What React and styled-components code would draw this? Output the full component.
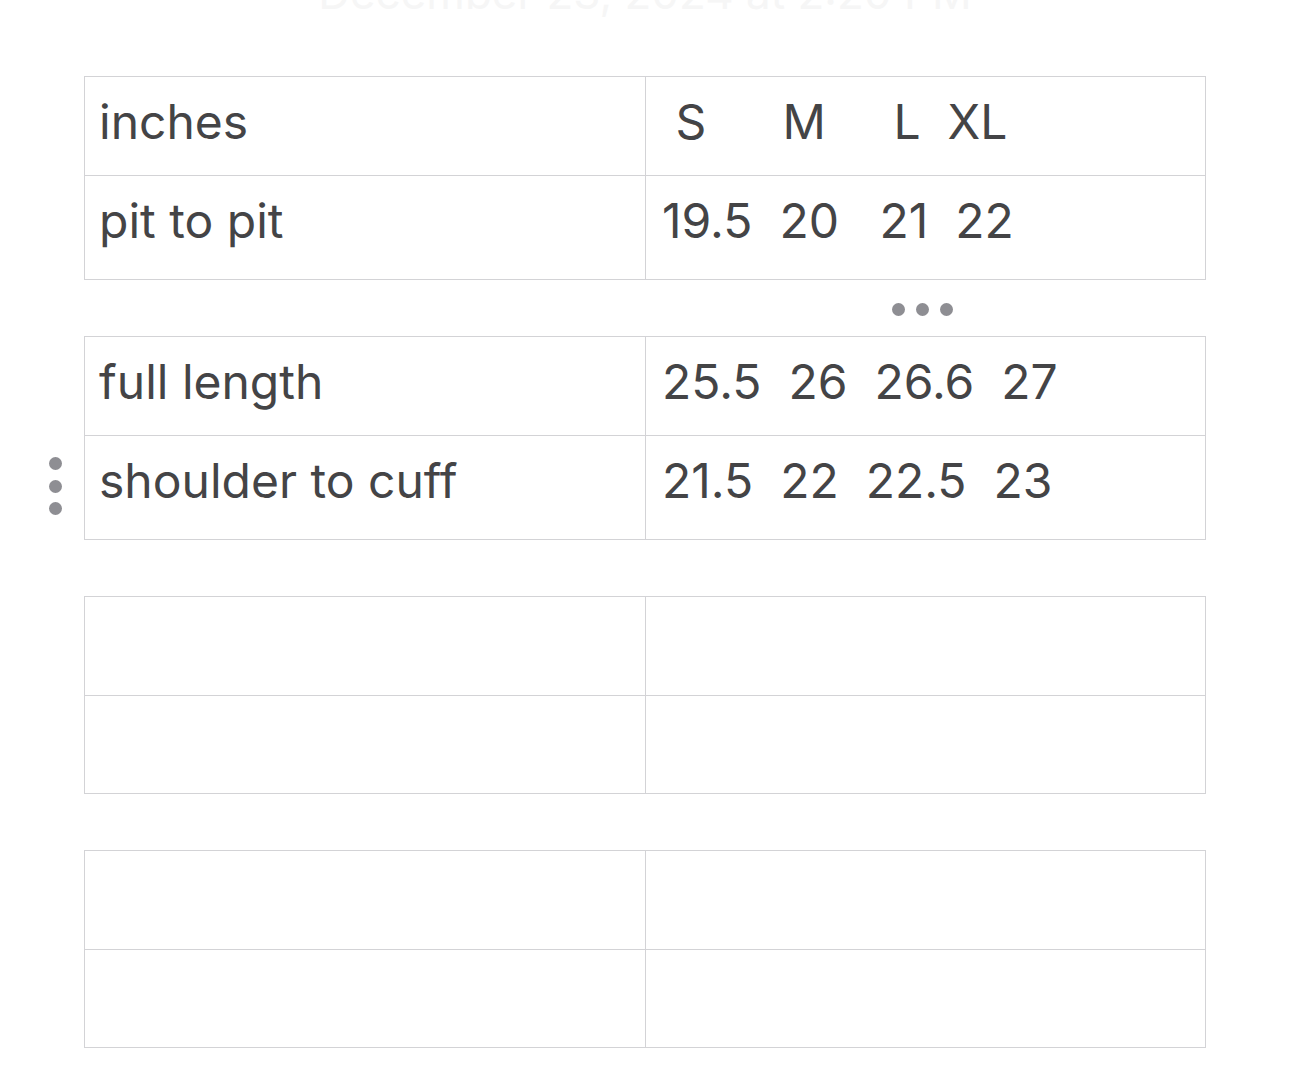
import styled, { createGlobalStyle } from 'styled-components';

const GlobalStyle = createGlobalStyle`
  html, body {
    margin: 0;
    padding: 0;
    background: #ffffff;
  }
  body {
    font-family: Inter, "Liberation Sans", sans-serif;
    overflow: hidden;
  }
`;

const Page = styled.div`
  width: 1290px;
  height: 1070px;
  overflow: hidden;
  padding-left: 84px;
  box-sizing: border-box;
`;

// the date heading scrolled mostly out of view
const DateLine = styled.div`
  width: 1122px;
  margin-top: -31px;
  height: 107px;
  text-align: center;
  font-size: 44px;
  line-height: 48px;
  color: #f6f6f6;
`;

const Stack = styled.div`
  display: flex;
  flex-direction: column;
  gap: 56px;
`;

const TableWrap = styled.div`
  position: relative;
  width: 1122px;
`;

const Table = styled.table`
  width: 1122px;
  border-collapse: collapse;
  table-layout: fixed;
  color: #444446;
  font-size: 48px;
`;

const Cell = styled.td`
  border: 1px solid #d3d3d6;
  padding: 21px 0 0 ${p => (p.$first ? 14 : 16)}px;
  height: ${p => p.$h}px;
  box-sizing: border-box;
  white-space: pre;
  vertical-align: top;
  line-height: 48px;
  width: ${p => (p.$first ? '561px' : 'auto')};
`;

const HDots = styled.div`
  position: absolute;
  left: 808px;
  top: -33px;
  display: flex;
  gap: 11px;
`;

const VDots = styled.div`
  position: absolute;
  left: -35px;
  top: 121px;
  display: flex;
  flex-direction: column;
  gap: 9.5px;
`;

const Dot = styled.span`
  width: 13px;
  height: 13px;
  border-radius: 50%;
  background: #8e8e93;
  display: block;
`;

const filled = [
  {
    rows: [
      ['inches', ' S     \u2009M     L  XL'],
      ['pit to pit', '19.5  20   21  22'],
    ],
  },
  {
    rows: [
      ['full length', '25.5  26  26.6  27'],
      ['shoulder to cuff', '21.5  22  22.5  23'],
    ],
    dots: true,
  },
];

function SizeTable({ rows, dots, empty }) {
  return (
    <TableWrap>
      {dots && (
        <>
          <HDots>
            <Dot />
            <Dot />
            <Dot />
          </HDots>
          <VDots>
            <Dot />
            <Dot />
            <Dot />
          </VDots>
        </>
      )}
      <Table>
        <tbody>
          {rows.map((r, i) => {
            const h = i === 0 ? 99 : empty ? 98 : 104;
            return (
              <tr key={i}>
                <Cell $first $h={h}>{r[0]}</Cell>
                <Cell $h={h}>{r[1]}</Cell>
              </tr>
            );
          })}
        </tbody>
      </Table>
    </TableWrap>
  );
}

export default function App() {
  return (
    <Page>
      <GlobalStyle />
      <DateLine>December 23, 2024 at 2:20 PM</DateLine>
      <Stack>
        {filled.map((t, i) => (
          <SizeTable key={i} rows={t.rows} dots={t.dots} />
        ))}
        <SizeTable empty rows={[['', ''], ['', '']]} />
        <SizeTable empty rows={[['', ''], ['', '']]} />
      </Stack>
    </Page>
  );
}
